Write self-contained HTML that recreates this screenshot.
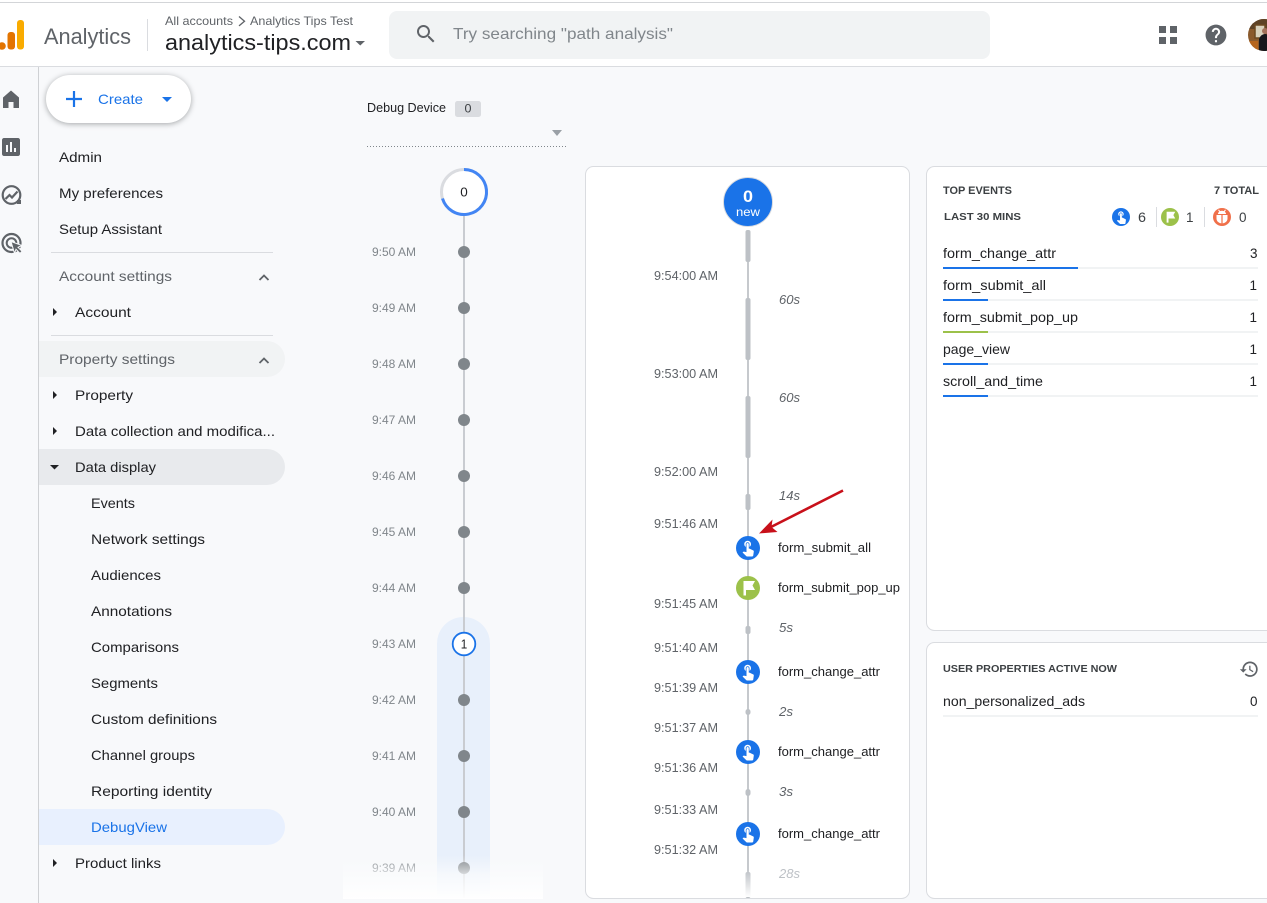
<!DOCTYPE html>
<html lang="en"><head><meta charset="utf-8"><title>Analytics DebugView</title>
<style>
html,body{margin:0;padding:0;width:1267px;height:903px;overflow:hidden;background:#f8f9fb}
svg{display:block}
text{font-family:"Liberation Sans",sans-serif;font-size:14px;fill:#202124}
.n text{font-size:14px}
.t text{font-size:12px;fill:#80868b}
.c text{font-size:12.5px;fill:#5f6368}
.e text{font-size:12.5px;fill:#202124}
.d text{font-size:12.5px;fill:#5f6368;font-style:italic}
.r text{font-size:14px;fill:#202124}
.h text{font-size:11px;font-weight:bold;fill:#3c4043}
</style></head><body>
<svg xmlns="http://www.w3.org/2000/svg" width="1267" height="903" viewBox="0 0 1267 903">
<defs>
<symbol id="touch" viewBox="0 0 24 24"><path fill="#fff" d="M9 11.24V7.5C9 6.12 10.12 5 11.5 5S14 6.12 14 7.5v3.74c1.21-.81 2-2.18 2-3.74C16 5.01 13.99 3 11.5 3S7 5.01 7 7.5c0 1.56.79 2.93 2 3.74zm9.84 4.63l-4.54-2.26c-.17-.07-.35-.11-.54-.11H13v-6c0-.83-.67-1.5-1.5-1.5S10 6.67 10 7.5v10.74l-3.43-.72c-.08-.01-.15-.03-.24-.03-.31 0-.59.13-.79.33l-.79.8 4.94 4.94c.27.27.65.44 1.06.44h6.79c.75 0 1.33-.55 1.44-1.28l.75-5.27c.01-.07.02-.14.02-.2 0-.62-.38-1.16-.91-1.38z"/></symbol>
<symbol id="flag" viewBox="0 0 24 24"><path fill="#fff" d="M7.500 5H19l-2.500 4.500L19 14h-9v5.500H7.500z"/></symbol>
<linearGradient id="fade" x1="0" y1="0" x2="0" y2="1"><stop offset="0" stop-color="#f8f9fb" stop-opacity="0"/><stop offset=".45" stop-color="#fbfcfd" stop-opacity=".72"/><stop offset="1" stop-color="#fff" stop-opacity=".98"/></linearGradient>
<linearGradient id="fade2" x1="0" y1="0" x2="0" y2="1"><stop offset="0" stop-color="#fff" stop-opacity="0"/><stop offset="1" stop-color="#fff"/></linearGradient>
<clipPath id="av"><circle cx="1264" cy="35" r="16"/></clipPath>
</defs>

<rect width="1267" height="903" fill="#f8f9fb"/>

<!-- header -->
<rect width="1267" height="66" fill="#fff"/>
<rect y="2" width="1267" height="1" fill="#d3d5d8"/>
<rect y="66" width="1267" height="1" fill="#dadce0"/>
<circle cx="2" cy="46" r="3.800" fill="#e37400"/>
<rect x="7.500" y="32" width="7.500" height="17.500" rx="3" fill="#e37400"/>
<rect x="17" y="20" width="7" height="29.500" rx="3" fill="#f9ab00"/>
<text x="44" y="44" style="font-size:22px;fill:#5f6368" textLength="87" lengthAdjust="spacingAndGlyphs">Analytics</text>
<rect x="147" y="19" width="1" height="32" fill="#dadce0"/>
<text x="165" y="25" style="font-size:12px;fill:#5f6368" textLength="68" lengthAdjust="spacingAndGlyphs">All accounts</text>
<path d="M239 16.500l5.500 4.700-5.500 4.700" fill="none" stroke="#5f6368" stroke-width="1.300"/>
<text x="250" y="25" style="font-size:12px;fill:#5f6368" textLength="103" lengthAdjust="spacingAndGlyphs">Analytics Tips Test</text>
<text x="165" y="50" style="font-size:22px;fill:#202124" textLength="186" lengthAdjust="spacingAndGlyphs">analytics-tips.com</text>
<path d="M355.500 41h9.500l-4.750 4.500z" fill="#5f6368"/>
<rect x="389" y="11" width="601" height="48" rx="8" fill="#f1f3f4"/>
<path transform="translate(414 22)" fill="#5f6368" d="M15.500 14h-.79l-.28-.27C15.410 12.590 16 11.110 16 9.500 16 5.910 13.090 3 9.500 3S3 5.910 3 9.500 5.910 16 9.500 16c1.610 0 3.090-.59 4.230-1.570l.27.28v.79l5 4.990L20.490 19l-4.990-5zm-6 0C7.010 14 5 11.990 5 9.500S7.010 5 9.500 5 14 7.010 14 9.500 11.990 14 9.500 14z"/>
<text x="453" y="39" style="font-size:16px;fill:#80868b" textLength="220" lengthAdjust="spacingAndGlyphs">Try searching "path analysis"</text>
<g fill="#5f6368"><rect x="1159" y="26" width="7" height="7"/><rect x="1170" y="26" width="7" height="7"/><rect x="1159" y="37" width="7" height="7"/><rect x="1170" y="37" width="7" height="7"/></g>
<path transform="translate(1203.500 22.500) scale(1.040)" fill="#5f6368" d="M12 2C6.480 2 2 6.480 2 12s4.480 10 10 10 10-4.480 10-10S17.520 2 12 2zm1 17h-2v-2h2v2zm2.070-7.750l-.9.92C13.450 12.900 13 13.500 13 15h-2v-.5c0-1.100.45-2.100 1.170-2.830l1.240-1.260c.37-.36.59-.86.59-1.410 0-1.100-.9-2-2-2s-2 .9-2 2H8c0-2.210 1.790-4 4-4s4 1.790 4 4c0 .88-.36 1.680-.93 2.250z"/>
<g clip-path="url(#av)"><rect x="1248" y="19" width="32" height="32" fill="#8a5a2c"/><rect x="1248" y="19" width="32" height="10" fill="#5e4326"/><rect x="1255" y="25" width="10" height="13" fill="#d9d2bd" stroke="#6d4a22" stroke-width="1.500"/><rect x="1248" y="41" width="10" height="10" fill="#b5651d"/><ellipse cx="1265" cy="31" rx="3" ry="3" fill="#a2715a"/><path d="M1259 51v-12q2-5 6-5t2 4v13z" fill="#17171c"/></g>

<!-- rail -->
<rect x="38" y="67" width="1" height="836" fill="#cfd1d4"/>
<path fill="#5f6368" d="M11 90.500L3 97.500V108h5.500v-6h5v6H19V97.500z"/>
<path transform="translate(-1 135)" fill="#5f6368" d="M19 3H5c-1.100 0-2 .9-2 2v14c0 1.100.9 2 2 2h14c1.100 0 2-.9 2-2V5c0-1.100-.9-2-2-2zM9 17H7v-7h2v7zm4 0h-2V7h2v10zm4 0h-2v-4h2v4z"/>
<circle cx="11.500" cy="195" r="8.800" fill="none" stroke="#5f6368" stroke-width="2.200"/>
<path d="M5.500 199l4-4 2.500 2.500 5.500-6" fill="none" stroke="#5f6368" stroke-width="2.200"/>
<rect x="17" y="200" width="4" height="4" fill="#5f6368"/>
<circle cx="11.500" cy="243" r="9" fill="none" stroke="#5f6368" stroke-width="2.200"/>
<circle cx="11.500" cy="243" r="4.800" fill="none" stroke="#5f6368" stroke-width="2"/>
<path d="M11 241.500l11 4-4 1.800 4 4-2 2-4-4-1.500 4z" fill="#5f6368" stroke="#f8f9fb" stroke-width="1"/>

<!-- create -->
<rect x="46" y="75" width="145" height="48" rx="24" fill="#fff" style="filter:drop-shadow(0 1px 3px rgba(60,64,67,.45))"/>
<path d="M74 91v16M66 99h16" stroke="#1a73e8" stroke-width="2.200" fill="none"/>
<text x="98" y="104" style="font-size:14px;fill:#1a73e8" textLength="45" lengthAdjust="spacingAndGlyphs">Create</text>
<path d="M162 97h10l-5 5z" fill="#1a73e8"/>

<!-- nav -->
<rect x="51" y="252" width="222" height="1" fill="#dadce0"/>
<rect x="51" y="335" width="222" height="1" fill="#dadce0"/>
<path d="M39 341h228a18 18 0 0 1 0 36H39z" fill="#f1f3f4"/>
<path d="M39 449h228a18 18 0 0 1 0 36H39z" fill="#e8eaed"/>
<path d="M39 809h228a18 18 0 0 1 0 36H39z" fill="#e8f0fe"/>
<g class="n">
<text x="59" y="162" textLength="43" lengthAdjust="spacingAndGlyphs">Admin</text>
<text x="59" y="198" textLength="104" lengthAdjust="spacingAndGlyphs">My preferences</text>
<text x="59" y="234" textLength="103" lengthAdjust="spacingAndGlyphs">Setup Assistant</text>
<text x="59" y="281" style="fill:#5f6368" textLength="113" lengthAdjust="spacingAndGlyphs">Account settings</text>
<text x="75" y="317" textLength="56" lengthAdjust="spacingAndGlyphs">Account</text>
<text x="59" y="364" style="fill:#5f6368" textLength="116" lengthAdjust="spacingAndGlyphs">Property settings</text>
<text x="75" y="400" textLength="58" lengthAdjust="spacingAndGlyphs">Property</text>
<text x="75" y="436" textLength="200" lengthAdjust="spacingAndGlyphs">Data collection and modifica...</text>
<text x="75" y="472" textLength="81" lengthAdjust="spacingAndGlyphs">Data display</text>
<text x="91" y="508" textLength="44" lengthAdjust="spacingAndGlyphs">Events</text>
<text x="91" y="544" textLength="114" lengthAdjust="spacingAndGlyphs">Network settings</text>
<text x="91" y="580" textLength="70" lengthAdjust="spacingAndGlyphs">Audiences</text>
<text x="91" y="616" textLength="81" lengthAdjust="spacingAndGlyphs">Annotations</text>
<text x="91" y="652" textLength="88" lengthAdjust="spacingAndGlyphs">Comparisons</text>
<text x="91" y="688" textLength="67" lengthAdjust="spacingAndGlyphs">Segments</text>
<text x="91" y="724" textLength="126" lengthAdjust="spacingAndGlyphs">Custom definitions</text>
<text x="91" y="760" textLength="104" lengthAdjust="spacingAndGlyphs">Channel groups</text>
<text x="91" y="796" textLength="121" lengthAdjust="spacingAndGlyphs">Reporting identity</text>
<text x="91" y="832" style="fill:#1a73e8" textLength="76" lengthAdjust="spacingAndGlyphs">DebugView</text>
<text x="75" y="868" textLength="86" lengthAdjust="spacingAndGlyphs">Product links</text>
</g>
<path d="M259.500 280l4.500-4.500 4.500 4.500M259.500 363l4.500-4.500 4.500 4.500" fill="none" stroke="#5f6368" stroke-width="1.800"/>
<g fill="#202124"><path d="M53 308l4 4-4 4z"/><path d="M53 391l4 4-4 4z"/><path d="M53 427l4 4-4 4z"/><path d="M50 465h9l-4.500 4.500z"/><path d="M53 859l4 4-4 4z"/></g>

<!-- debug device -->
<text x="367" y="112" style="font-size:12.500px" textLength="79" lengthAdjust="spacingAndGlyphs">Debug Device</text>
<rect x="455" y="101" width="26" height="16" rx="2.500" fill="#dadce0"/>
<text x="464.500" y="112.500" style="font-size:12px;fill:#3c4043" textLength="7" lengthAdjust="spacingAndGlyphs">0</text>
<path d="M552 130h10l-5 6z" fill="#9aa0a6"/>
<line x1="367" y1="146.500" x2="566" y2="146.500" stroke="#80868b" stroke-width="1" stroke-dasharray="1 2"/>

<!-- minute timeline -->
<path d="M437 643.500a26.500 26.500 0 0 1 53 0V898h-53z" fill="#e8f0fb"/>
<rect x="463" y="216" width="2" height="682" fill="#c9ccd1"/>
<g fill="#80868b"><circle cx="464" cy="252" r="6"/><circle cx="464" cy="308" r="6"/><circle cx="464" cy="364" r="6"/><circle cx="464" cy="420" r="6"/><circle cx="464" cy="476" r="6"/><circle cx="464" cy="532" r="6"/><circle cx="464" cy="588" r="6"/><circle cx="464" cy="700" r="6"/><circle cx="464" cy="756" r="6"/><circle cx="464" cy="812" r="6"/><circle cx="464" cy="868" r="6"/></g>
<circle cx="464" cy="192" r="22.500" fill="#fff" stroke="#dadce0" stroke-width="3"/>
<path d="M464 169.500a22.500 22.500 0 1 1 -21.500 29" fill="none" stroke="#4285f4" stroke-width="3"/>
<text x="460.300" y="196.500" style="font-size:13px" textLength="7.500" lengthAdjust="spacingAndGlyphs">0</text>
<circle cx="464" cy="644" r="11.300" fill="#fff" stroke="#1a73e8" stroke-width="1.800"/>
<text x="460.800" y="648.500" style="font-size:12.500px" textLength="6.500" lengthAdjust="spacingAndGlyphs">1</text>
<g class="t">
<text x="372" y="256" textLength="44" lengthAdjust="spacingAndGlyphs">9:50 AM</text>
<text x="372" y="312" textLength="44" lengthAdjust="spacingAndGlyphs">9:49 AM</text>
<text x="372" y="368" textLength="44" lengthAdjust="spacingAndGlyphs">9:48 AM</text>
<text x="372" y="424" textLength="44" lengthAdjust="spacingAndGlyphs">9:47 AM</text>
<text x="372" y="480" textLength="44" lengthAdjust="spacingAndGlyphs">9:46 AM</text>
<text x="372" y="536" textLength="44" lengthAdjust="spacingAndGlyphs">9:45 AM</text>
<text x="372" y="592" textLength="44" lengthAdjust="spacingAndGlyphs">9:44 AM</text>
<text x="372" y="648" textLength="44" lengthAdjust="spacingAndGlyphs">9:43 AM</text>
<text x="372" y="704" textLength="44" lengthAdjust="spacingAndGlyphs">9:42 AM</text>
<text x="372" y="760" textLength="44" lengthAdjust="spacingAndGlyphs">9:41 AM</text>
<text x="372" y="816" textLength="44" lengthAdjust="spacingAndGlyphs">9:40 AM</text>
<text x="372" y="872" textLength="44" lengthAdjust="spacingAndGlyphs">9:39 AM</text>
</g>
<rect x="343" y="855" width="200" height="44" fill="url(#fade)"/>

<!-- main card -->
<rect x="585.500" y="166.500" width="324" height="732" rx="8" fill="#fff" stroke="#dadce0"/>
<rect x="747" y="230" width="2" height="668" fill="#c6c9cd"/>
<g fill="#bdc1c6">
<rect x="745.500" y="230" width="5" height="32" rx="2"/>
<rect x="745.500" y="298" width="5" height="62" rx="2"/>
<rect x="745.500" y="396" width="5" height="62" rx="2"/>
<rect x="745.500" y="494" width="5" height="16" rx="2"/>
<rect x="745.500" y="626" width="5" height="8" rx="2"/>
<rect x="745.500" y="709" width="5" height="6" rx="2.500"/>
<rect x="745.500" y="789" width="5" height="7" rx="2.500"/>
<rect x="745.500" y="872" width="5" height="26" rx="2"/>
</g>
<rect x="740" y="870" width="16" height="27" fill="url(#fade2)"/>
<circle cx="748" cy="202" r="24.500" fill="#1a73e8" stroke="#dadce0" stroke-width="1"/>
<text x="743" y="202" style="font-size:17px;font-weight:bold;fill:#fff" textLength="10" lengthAdjust="spacingAndGlyphs">0</text>
<text x="736" y="216" style="font-size:12px;fill:#fff" textLength="24" lengthAdjust="spacingAndGlyphs">new</text>

<circle cx="748" cy="548" r="12" fill="#1a73e8"/><use href="#touch" x="739" y="538.500" width="18" height="18"/>
<circle cx="748" cy="588" r="12" fill="#9cc14a"/><use href="#flag" x="736" y="576" width="24" height="24"/>
<circle cx="748" cy="672" r="12" fill="#1a73e8"/><use href="#touch" x="739" y="662.500" width="18" height="18"/>
<circle cx="748" cy="752" r="12" fill="#1a73e8"/><use href="#touch" x="739" y="742.500" width="18" height="18"/>
<circle cx="748" cy="834" r="12" fill="#1a73e8"/><use href="#touch" x="739" y="824.500" width="18" height="18"/>

<line x1="843" y1="490.500" x2="770" y2="527.500" stroke="#c8101a" stroke-width="2.600"/>
<path d="M759 533.500l13.500-14-1 7.500 6 5z" fill="#c8101a"/>

<g class="c">
<text x="654" y="280" textLength="64" lengthAdjust="spacingAndGlyphs">9:54:00 AM</text>
<text x="654" y="378" textLength="64" lengthAdjust="spacingAndGlyphs">9:53:00 AM</text>
<text x="654" y="476" textLength="64" lengthAdjust="spacingAndGlyphs">9:52:00 AM</text>
<text x="654" y="528" textLength="64" lengthAdjust="spacingAndGlyphs">9:51:46 AM</text>
<text x="654" y="608" textLength="64" lengthAdjust="spacingAndGlyphs">9:51:45 AM</text>
<text x="654" y="652" textLength="64" lengthAdjust="spacingAndGlyphs">9:51:40 AM</text>
<text x="654" y="692" textLength="64" lengthAdjust="spacingAndGlyphs">9:51:39 AM</text>
<text x="654" y="732" textLength="64" lengthAdjust="spacingAndGlyphs">9:51:37 AM</text>
<text x="654" y="772" textLength="64" lengthAdjust="spacingAndGlyphs">9:51:36 AM</text>
<text x="654" y="814" textLength="64" lengthAdjust="spacingAndGlyphs">9:51:33 AM</text>
<text x="654" y="854" textLength="64" lengthAdjust="spacingAndGlyphs">9:51:32 AM</text>
</g>
<g class="d">
<text x="779" y="304" textLength="21" lengthAdjust="spacingAndGlyphs">60s</text>
<text x="779" y="402" textLength="21" lengthAdjust="spacingAndGlyphs">60s</text>
<text x="779" y="500" textLength="21" lengthAdjust="spacingAndGlyphs">14s</text>
<text x="779" y="632" textLength="14" lengthAdjust="spacingAndGlyphs">5s</text>
<text x="779" y="716" textLength="14" lengthAdjust="spacingAndGlyphs">2s</text>
<text x="779" y="796" textLength="14" lengthAdjust="spacingAndGlyphs">3s</text>
<text x="779" y="878" style="fill:#bdc1c6" textLength="21" lengthAdjust="spacingAndGlyphs">28s</text>
</g>
<g class="e">
<text x="778" y="552" textLength="93" lengthAdjust="spacingAndGlyphs">form_submit_all</text>
<text x="778" y="592" textLength="122" lengthAdjust="spacingAndGlyphs">form_submit_pop_up</text>
<text x="778" y="676" textLength="102" lengthAdjust="spacingAndGlyphs">form_change_attr</text>
<text x="778" y="756" textLength="102" lengthAdjust="spacingAndGlyphs">form_change_attr</text>
<text x="778" y="838" textLength="102" lengthAdjust="spacingAndGlyphs">form_change_attr</text>
</g>

<!-- right top card -->
<rect x="926.500" y="166.500" width="360" height="464" rx="8" fill="#fff" stroke="#dadce0"/>
<g class="h">
<text x="943" y="194" textLength="69" lengthAdjust="spacingAndGlyphs">TOP EVENTS</text>
<text x="1214" y="194" textLength="45" lengthAdjust="spacingAndGlyphs">7 TOTAL</text>
<text x="944" y="220" style="font-size:10.500px" textLength="77" lengthAdjust="spacingAndGlyphs">LAST 30 MINS</text>
</g>
<circle cx="1121" cy="217" r="9" fill="#1a73e8"/><use href="#touch" x="1114" y="209.500" width="14.500" height="14.500"/>
<text x="1138" y="222" style="font-size:13.500px;fill:#3c4043" textLength="8" lengthAdjust="spacingAndGlyphs">6</text>
<rect x="1156" y="207" width="1" height="20" fill="#dadce0"/>
<circle cx="1170" cy="217" r="9" fill="#9cc14a"/><use href="#flag" x="1161" y="208" width="18" height="18"/>
<text x="1186" y="222" style="font-size:13.500px;fill:#3c4043" textLength="7.500" lengthAdjust="spacingAndGlyphs">1</text>
<rect x="1204" y="207" width="1" height="20" fill="#dadce0"/>
<circle cx="1222" cy="217" r="9" fill="#f0704a"/>
<path d="M1216.500 215h11v3.500a5.500 5 0 0 1-11 0z" fill="#fff"/>
<path d="M1218 214a4 3.200 0 0 1 8 0z" fill="#fff"/>
<path d="M1218.500 209.800l1.500 2M1225.500 209.800l-1.500 2" stroke="#fff" stroke-width="1"/>
<path d="M1222 215v9" stroke="#f0704a" stroke-width="1.200"/>
<text x="1239" y="222" style="font-size:13.500px;fill:#3c4043" textLength="7.500" lengthAdjust="spacingAndGlyphs">0</text>

<g fill="#f1f3f4"><rect x="943" y="267" width="315" height="2"/><rect x="943" y="299" width="315" height="2"/><rect x="943" y="331" width="315" height="2"/><rect x="943" y="363" width="315" height="2"/><rect x="943" y="395" width="315" height="2"/></g>
<rect x="943" y="267" width="135" height="2" fill="#1a73e8"/>
<rect x="943" y="299" width="45" height="2" fill="#1a73e8"/>
<rect x="943" y="331" width="45" height="2" fill="#9cc14a"/>
<rect x="943" y="363" width="45" height="2" fill="#1a73e8"/>
<rect x="943" y="395" width="45" height="2" fill="#1a73e8"/>
<g class="r">
<text x="943" y="258" textLength="113" lengthAdjust="spacingAndGlyphs">form_change_attr</text>
<text x="943" y="290" textLength="103" lengthAdjust="spacingAndGlyphs">form_submit_all</text>
<text x="943" y="322" textLength="135" lengthAdjust="spacingAndGlyphs">form_submit_pop_up</text>
<text x="943" y="354" textLength="67" lengthAdjust="spacingAndGlyphs">page_view</text>
<text x="943" y="386" textLength="100" lengthAdjust="spacingAndGlyphs">scroll_and_time</text>
<text x="1250" y="258" textLength="7.500" lengthAdjust="spacingAndGlyphs">3</text>
<text x="1249.500" y="290" textLength="7.500" lengthAdjust="spacingAndGlyphs">1</text>
<text x="1249.500" y="322" textLength="7.500" lengthAdjust="spacingAndGlyphs">1</text>
<text x="1249.500" y="354" textLength="7.500" lengthAdjust="spacingAndGlyphs">1</text>
<text x="1249.500" y="386" textLength="7.500" lengthAdjust="spacingAndGlyphs">1</text>
</g>

<!-- right bottom card -->
<rect x="926.500" y="642.500" width="360" height="256" rx="8" fill="#fff" stroke="#dadce0"/>
<g class="h"><text x="943" y="672" style="font-size:10.500px" textLength="174" lengthAdjust="spacingAndGlyphs">USER PROPERTIES ACTIVE NOW</text></g>
<path transform="translate(1239 659) scale(.85)" fill="#5f6368" d="M13 3c-4.970 0-9 4.030-9 9H1l3.890 3.890.07.14L9 12H6c0-3.870 3.130-7 7-7s7 3.130 7 7-3.130 7-7 7c-1.930 0-3.680-.79-4.940-2.060l-1.420 1.420C8.270 19.990 10.510 21 13 21c4.970 0 9-4.030 9-9s-4.030-9-9-9zm-1 5v5l4.280 2.540.72-1.210-3.500-2.080V8H12z"/>
<g class="r">
<text x="943" y="706" textLength="142" lengthAdjust="spacingAndGlyphs">non_personalized_ads</text>
<text x="1250" y="706" textLength="7.500" lengthAdjust="spacingAndGlyphs">0</text>
</g>
<rect x="943" y="715" width="315" height="2" fill="#f1f3f4"/>
</svg>
</body></html>
